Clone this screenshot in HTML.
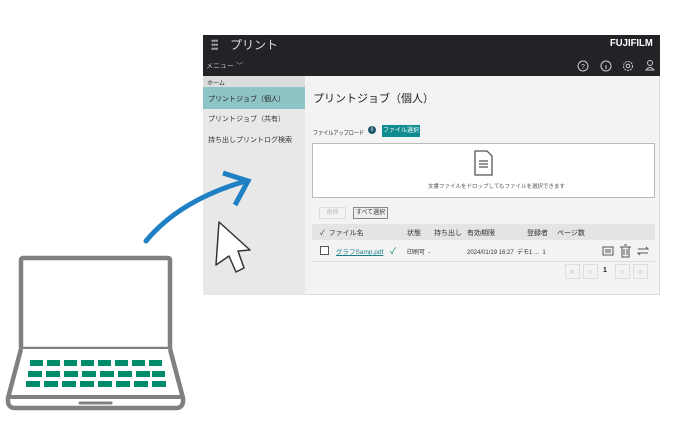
<!DOCTYPE html>
<html><head><meta charset="utf-8"><style>
*{margin:0;padding:0;box-sizing:border-box}
body{width:686px;height:431px;background:#fff;position:relative;overflow:hidden;font-family:"Liberation Sans","Noto Sans CJK JP",sans-serif;color:#333}
.a{position:absolute;white-space:nowrap}
.pg{position:absolute;top:264px;width:15px;height:15px;border:1px solid #ddd;font-size:8px;color:#bbb;text-align:center;line-height:13px}
</style></head><body>
<div class="a" style="left:203px;top:35px;width:457px;height:260px;background:#f3f3f3;border:1px solid #ddd"></div>
<div class="a" style="left:203px;top:35px;width:457px;height:41px;background:#222326"></div>
<div class="a" style="left:211px;top:39px;font-size:9px;color:#999;letter-spacing:-1px;line-height:4px">•••<br>•••<br>•••</div>
<div class="a" style="left:230px;top:36px;font-size:12px;color:#ddd">プリント</div>
<div class="a" style="left:610px;top:38px;font-size:10px;font-weight:bold;color:#fff;transform:scaleX(0.95);transform-origin:left">FUJIFILM</div>
<div class="a" style="left:206px;top:61px;font-size:7px;color:#bbb">メニュー ﹀</div>
<svg class="a" style="left:575px;top:58px" width="85" height="16" fill="none" stroke="#ccc" stroke-width="1">
<circle cx="8" cy="8" r="5"/><text x="6" y="11" font-size="7" fill="#ccc" stroke="none">?</text>
<circle cx="31" cy="8" r="5"/><line x1="31" y1="7" x2="31" y2="11"/>
<circle cx="53" cy="8" r="4.5" stroke-dasharray="2 1"/><circle cx="53" cy="8" r="1.8"/>
<circle cx="75" cy="5" r="2.5"/><path d="M71 12 q4 -5 8 0 z"/>
</svg>
<div class="a" style="left:203px;top:76px;width:102px;height:219px;background:#e8e8e8"></div>
<div class="a" style="left:203px;top:76px;width:102px;height:11px;background:#dcdcdc;font-size:6px;padding:2px 4px">ホーム</div>
<div class="a" style="left:203px;top:87px;width:102px;height:22px;background:#8fc4c6;font-size:7px;padding:7px 5px;color:#222">プリントジョブ（個人）</div>
<div class="a" style="left:208px;top:114px;font-size:7px">プリントジョブ（共有）</div>
<div class="a" style="left:208px;top:135px;font-size:7px">持ち出しプリントログ検索</div>
<div class="a" style="left:313px;top:90px;font-size:11px;color:#222">プリントジョブ（個人）</div>
<div class="a" style="left:313px;top:128px;font-size:6px;transform:scaleX(0.85);transform-origin:left">ファイルアップロード</div>
<div class="a" style="left:368px;top:126px;width:8px;height:8px;border-radius:50%;background:#1e5a6b;color:#fff;font-size:6px;text-align:center;line-height:8px;font-weight:bold">i</div>
<div class="a" style="left:382px;top:125px;width:38px;height:12px;background:#0e8c8f;color:#fff;font-size:6px;text-align:center;line-height:12px">ファイル選択</div>
<div class="a" style="left:312px;top:143px;width:343px;height:55px;background:#fff;border:1px solid #bbb"></div>
<svg class="a" style="left:474px;top:150px" width="20" height="26" fill="none" stroke="#555" stroke-width="1.3"><path d="M1 1h12l5 5v19H1z"/><path d="M5 11h9M5 14h9M5 17h9"/></svg>
<div class="a" style="left:428px;top:182px;font-size:5.5px;color:#555">文書ファイルをドロップしてもファイルを選択できます</div>
<div class="a" style="left:319px;top:207px;width:27px;height:12px;border:1px solid #ddd;font-size:6px;color:#bbb;text-align:center;line-height:10px">削除</div>
<div class="a" style="left:353px;top:207px;width:35px;height:12px;border:1px solid #888;background:#eee;font-size:6px;text-align:center;line-height:10px">すべて選択</div>
<div class="a" style="left:312px;top:224px;width:343px;height:16px;background:#e4e4e4"></div>
<div class="a" style="left:320px;top:228px;font-size:7px">✓ &nbsp;ファイル名</div>
<div class="a" style="left:407px;top:228px;font-size:7px">状態</div>
<div class="a" style="left:434px;top:228px;font-size:7px">持ち出し</div>
<div class="a" style="left:467px;top:228px;font-size:7px">有効期限</div>
<div class="a" style="left:527px;top:228px;font-size:7px">登録者</div>
<div class="a" style="left:557px;top:228px;font-size:7px">ページ数</div>
<div class="a" style="left:320px;top:246px;width:9px;height:9px;border:1px solid #555;background:#fff"></div>
<div class="a" style="left:336px;top:246px;font-size:6.5px;color:#1a7f8a;text-decoration:underline">グラフSamp.pdf</div>
<div class="a" style="left:390px;top:244px;font-size:9px;color:#1a8f7a">✓</div>
<div class="a" style="left:407px;top:247px;font-size:6px">印刷可 &nbsp;-</div>
<div class="a" style="left:467px;top:247px;font-size:6px">2024/01/19 16:27 &nbsp;デモ1 ... &nbsp;1</div>
<svg class="a" style="left:602px;top:244px" width="50" height="14" fill="none" stroke="#555" stroke-width="1"><rect x="1" y="3" width="10" height="8"/><path d="M3 6h6M3 8h6"/><rect x="20" y="3" width="7" height="10"/><path d="M18 3h11M22 1h3M22 5v6M25 5v6"/><path d="M36 5h10l-2-2M46 9H36l2 2"/></svg>
<div class="a" style="left:312px;top:261px;width:343px;height:1px;background:#ddd"></div>
<div class="pg" style="left:565px">«</div>
<div class="pg" style="left:583px">‹</div>
<div class="a" style="left:603px;top:267px;font-size:7px;font-weight:bold;color:#222">1</div>
<div class="pg" style="left:615px">›</div>
<div class="pg" style="left:633px">»</div>
<svg class="a" style="left:0;top:0" width="686" height="431">
<path d="M146 241 Q180 200 246 181" fill="none" stroke="#2080c4" stroke-width="5" stroke-linecap="round"/>
<path d="M223 173 L248 181 L235 205" fill="none" stroke="#2080c4" stroke-width="5" stroke-linejoin="miter"/>
<path d="M219 222 L250 250 L238 251 L244 268 L236 272 L229 256 L216 265 Z" fill="#fff" stroke="#333" stroke-width="1.5" stroke-linejoin="round"/>
<rect x="21" y="258" width="149" height="91" rx="2" fill="#fff" stroke="#808080" stroke-width="4.5"/>
<path d="M21 349 L8 398 Q7 408 15 408 L176 408 Q184 408 183 398 L170 349" fill="#fff" stroke="#808080" stroke-width="4.5" stroke-linejoin="round"/>
<path d="M10 397 H181" stroke="#808080" stroke-width="4"/>
<path d="M80 403 H111" stroke="#808080" stroke-width="3" stroke-linecap="round"/>
<g fill="#008c6a">
<rect x="30" y="360" width="13" height="6"/><rect x="47" y="360" width="13" height="6"/><rect x="64" y="360" width="13" height="6"/><rect x="81" y="360" width="13" height="6"/><rect x="98" y="360" width="13" height="6"/><rect x="115" y="360" width="13" height="6"/><rect x="132" y="360" width="13" height="6"/><rect x="149" y="360" width="13" height="6"/>
<rect x="28" y="371" width="14" height="6"/><rect x="46" y="371" width="14" height="6"/><rect x="64" y="371" width="14" height="6"/><rect x="82" y="371" width="14" height="6"/><rect x="100" y="371" width="14" height="6"/><rect x="118" y="371" width="14" height="6"/><rect x="136" y="371" width="14" height="6"/><rect x="152" y="371" width="13" height="6"/>
<rect x="26" y="381" width="14" height="6"/><rect x="44" y="381" width="14" height="6"/><rect x="62" y="381" width="14" height="6"/><rect x="80" y="381" width="14" height="6"/><rect x="98" y="381" width="14" height="6"/><rect x="116" y="381" width="14" height="6"/><rect x="134" y="381" width="14" height="6"/><rect x="152" y="381" width="14" height="6"/>
</g>
</svg>
</body></html>
